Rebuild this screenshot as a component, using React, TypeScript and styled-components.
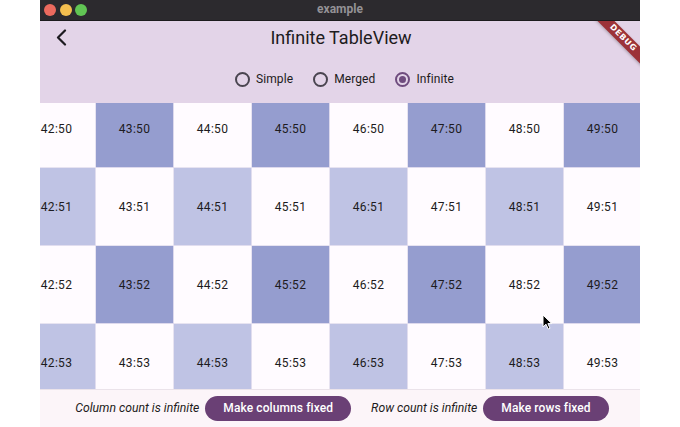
import React from "react";
import styled, { createGlobalStyle } from "styled-components";

const Global = createGlobalStyle`
  html, body { margin: 0; padding: 0; background: #ffffff; }
  body { font-family: Roboto, "Liberation Sans", sans-serif; }
  * { box-sizing: border-box; }
`;

const Window = styled.div`
  position: relative;
  margin-left: 40px;
  width: 600px;
  height: 427px;
  display: flex;
  flex-direction: column;
  overflow: hidden;
  background: #fffbff;
`;

const TitleBar = styled.div`
  height: 21px;
  flex: none;
  background: #2c2a2e;
  border-bottom: 1px solid #1c1b1d;
  display: flex;
  align-items: center;
  position: relative;
  padding-left: 4px;
  gap: 3.5px;
`;

const Light = styled.span<{ $c: string }>`
  width: 12px;
  height: 12px;
  border-radius: 50%;
  background: ${(p) => p.$c};
`;

const WindowTitle = styled.div`
  position: absolute;
  left: 0;
  right: 0;
  top: 0;
  height: 20px;
  line-height: 19px;
  text-align: center;
  color: #949296;
  font-size: 12px;
  font-weight: 700;
`;

const AppBar = styled.div`
  flex: none;
  height: 82px;
  background: #e3d4e8;
  display: flex;
  flex-direction: column;
  position: relative;
`;

const TopRow = styled.div`
  height: 32px;
  display: flex;
  align-items: center;
  justify-content: center;
  position: relative;
`;

const BackButton = styled.div`
  position: absolute;
  left: 15px;
  top: 8px;
  width: 14px;
  height: 17px;
  display: flex;
`;

const Title = styled.div`
  font-size: 18px;
  color: #1d1b20;
  font-weight: 400;
  padding-left: 2px;
`;

const RadioRow = styled.div`
  height: 50px;
  display: flex;
  align-items: center;
  justify-content: center;
  gap: 20px;
  padding-left: 9px;
  padding-top: 2px;
`;

const RadioItem = styled.div`
  display: flex;
  align-items: center;
  gap: 6px;
`;

const RadioCircle = styled.span<{ $on?: boolean }>`
  width: 15px;
  height: 15px;
  border-radius: 50%;
  border: 2px solid ${(p) => (p.$on ? "#6f4c7e" : "#4a4550")};
  display: flex;
  align-items: center;
  justify-content: center;
  &::after {
    content: "";
    width: 7px;
    height: 7px;
    border-radius: 50%;
    background: ${(p) => (p.$on ? "#6f4c7e" : "transparent")};
  }
`;

const RadioLabel = styled.span`
  font-size: 12px;
  color: #1d1b20;
  letter-spacing: 0.1px;
`;

const Viewport = styled.div`
  flex: 1;
  overflow: hidden;
  background: #fffbff;
`;

const Grid = styled.div`
  display: grid;
  grid-template-columns: repeat(8, 78px);
  grid-auto-rows: 78px;
  margin: -13px 0 0 -22px;
  width: max-content;
`;

const Cell = styled.div<{ $tone: "dark" | "light" | "white" }>`
  display: flex;
  align-items: center;
  justify-content: center;
  padding-top: 1px;
  font-size: 12px;
  color: #1d1b20;
  letter-spacing: 0.3px;
  background: ${(p) =>
    p.$tone === "dark" ? "#959dcf" : p.$tone === "light" ? "#bfc3e4" : "#fffbff"};
  border-right: 1px solid rgba(228, 224, 240, 0.9);
  border-bottom: 1px solid rgba(228, 224, 240, 0.9);
`;

const BottomBar = styled.div`
  flex: none;
  height: 38px;
  background: #fcf5f9;
  border-top: 1px solid #ebe3ea;
  display: flex;
  align-items: center;
  justify-content: center;
  padding-left: 4px;
  padding-bottom: 1px;
`;

const Group = styled.div`
  display: flex;
  align-items: center;
  gap: 6px;
  & + & {
    margin-left: 20px;
  }
`;

const Note = styled.span`
  font-style: italic;
  font-size: 12.2px;
  color: #1d1b20;
`;

const PillButton = styled.button`
  height: 25px;
  padding: 0 18px;
  border: none;
  border-radius: 13px;
  background: #6a4075;
  color: #ffffff;
  font-family: Roboto, "Liberation Sans", sans-serif;
  font-size: 12px;
  font-weight: 500;
  letter-spacing: 0.1px;
`;

const BannerCorner = styled.div`
  position: absolute;
  top: 21px;
  right: 0;
  width: 60px;
  height: 60px;
  overflow: hidden;
  pointer-events: none;
`;

const Ribbon = styled.div`
  position: absolute;
  left: -7px;
  top: 11px;
  width: 100px;
  height: 12px;
  line-height: 12px;
  transform: rotate(45deg);
  background: #9c3238;
  box-shadow: 0 1px 3px rgba(0, 0, 0, 0.25);
  color: #ffffff;
  font-size: 8px;
  font-weight: 700;
  letter-spacing: 0.6px;
  text-align: center;
  font-family: "DejaVu Sans", sans-serif;
`;

const Cursor = styled.svg`
  position: absolute;
  left: 502px;
  top: 314px;
  pointer-events: none;
`;

const cols = [42, 43, 44, 45, 46, 47, 48, 49];
const rows = [50, 51, 52, 53];

function tone(c: number, r: number): "dark" | "light" | "white" {
  if (r % 2 === 0) return c % 2 === 1 ? "dark" : "white";
  return c % 2 === 0 ? "light" : "white";
}

export default function App() {
  return (
    <>
      <Global />
      <Window>
        <TitleBar>
          <Light $c="#ec6a5e" />
          <Light $c="#f4bf4f" />
          <Light $c="#61c554" />
          <WindowTitle>example</WindowTitle>
        </TitleBar>
        <AppBar>
          <TopRow>
            <BackButton>
              <svg width="14" height="17" viewBox="0 0 14 17">
                <polyline
                  points="10,1.5 3,8.5 10,15.5"
                  fill="none"
                  stroke="#1d1b20"
                  strokeWidth="2.2"
                  strokeLinecap="round"
                  strokeLinejoin="round"
                />
              </svg>
            </BackButton>
            <Title>Infinite TableView</Title>
          </TopRow>
          <RadioRow>
            <RadioItem>
              <RadioCircle />
              <RadioLabel>Simple</RadioLabel>
            </RadioItem>
            <RadioItem>
              <RadioCircle />
              <RadioLabel>Merged</RadioLabel>
            </RadioItem>
            <RadioItem>
              <RadioCircle $on />
              <RadioLabel>Infinite</RadioLabel>
            </RadioItem>
          </RadioRow>
        </AppBar>
        <Viewport>
          <Grid>
            {rows.map((r) =>
              cols.map((c) => (
                <Cell key={`${c}:${r}`} $tone={tone(c, r)}>
                  {c}:{r}
                </Cell>
              ))
            )}
          </Grid>
        </Viewport>
        <BottomBar>
          <Group>
            <Note>Column count is infinite</Note>
            <PillButton>Make columns fixed</PillButton>
          </Group>
          <Group>
            <Note>Row count is infinite</Note>
            <PillButton>Make rows fixed</PillButton>
          </Group>
        </BottomBar>
        <BannerCorner>
          <Ribbon>DEBUG</Ribbon>
        </BannerCorner>
        <Cursor width="11" height="16" viewBox="0 0 11 16">
          <path
            d="M1 1 L1 13 L4 10.2 L6.2 15 L8 14.2 L5.9 9.6 L9.8 9.6 Z"
            fill="#000"
            stroke="#fff"
            strokeWidth="1"
            strokeLinejoin="round"
          />
        </Cursor>
      </Window>
    </>
  );
}
